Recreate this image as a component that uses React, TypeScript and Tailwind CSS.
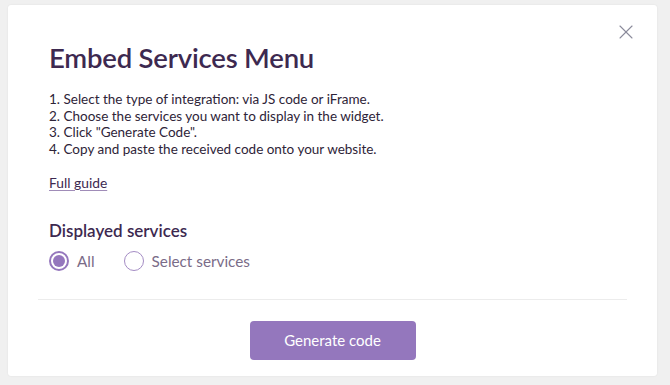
import { X } from 'lucide-react';

const steps = [
  '1. Select the type of integration: via JS code or iFrame.',
  '2. Choose the services you want to display in the widget.',
  '3. Click "Generate Code".',
  '4. Copy and paste the received code onto your website.',
];

export default function App() {
  return (
    <div
      className="w-[670px] h-[385px] bg-[#f0f0f0] pt-[5px] pl-[8px]"
      style={{ fontFamily: 'Lato, "Open Sans", sans-serif' }}
    >
      <div className="relative w-[649px] h-[371px] bg-white rounded-[3px] shadow-[0_0_2px_rgba(0,0,0,0.08)] flex flex-col">
        <button className="absolute top-[15px] right-[19px] text-[#8b8b9b]">
          <X size={24} strokeWidth={1.1} />
        </button>
        <div className="px-[41px] pt-[36px]">
          <h1 className="text-[27.5px] leading-[34px] font-semibold text-[#3d2950] tracking-[-0.2px]">
            Embed Services Menu
          </h1>
          <div className="mt-[16px] text-[13.5px] leading-[16.5px] text-[#2e2438]">
            {steps.map((s) => (
              <p key={s}>{s}</p>
            ))}
          </div>
          <a href="#" className="inline-block mt-[17px] text-[13.8px] leading-[18px] text-[#3d2950] underline underline-offset-2 decoration-[#a08cb8]">
            Full guide
          </a>
          <h2 className="mt-[26px] text-[17px] leading-[22px] font-semibold text-[#3d2950]">
            Displayed services
          </h2>
          <div className="mt-[8px] flex items-center gap-[29px] text-[15.3px] text-[#7a6c88]">
            <label className="flex items-center gap-[8px]">
              <span className="w-[20px] h-[20px] rounded-full border-2 border-[#9577bd] flex items-center justify-center">
                <span className="w-[12px] h-[12px] rounded-full bg-[#9577bd]" />
              </span>
              All
            </label>
            <label className="flex items-center gap-[8px]">
              <span className="w-[20px] h-[20px] rounded-full border border-[#a48cc4]" />
              Select services
            </label>
          </div>
        </div>
        <div className="mx-[30px] mt-[26px] border-t border-[#ececec]" />
        <div className="flex justify-center pt-[21px]">
          <button className="w-[166px] h-[39px] rounded-[4px] bg-[#9477bd] text-white text-[15px]">
            Generate code
          </button>
        </div>
      </div>
    </div>
  );
}
